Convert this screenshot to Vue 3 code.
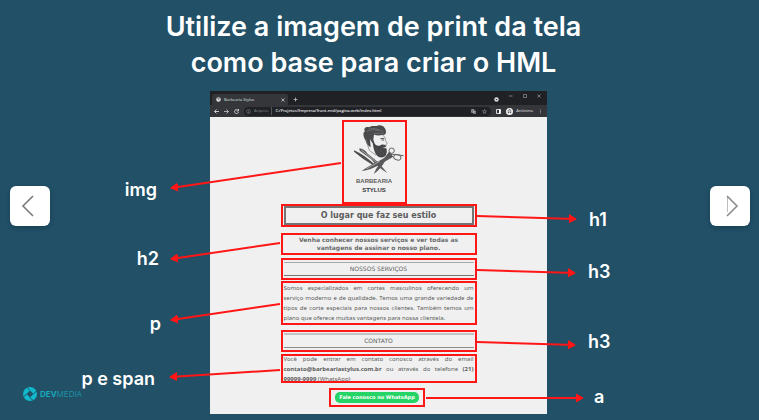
<script setup>
const arrows = [
  { x1: 131, y1: 72, x2: -39, y2: 97 },
  { x1: 70, y1: 152, x2: -39, y2: 168 },
  { x1: 70, y1: 213, x2: -39, y2: 229 },
  { x1: 70, y1: 279, x2: -40, y2: 286 },
  { x1: 267, y1: 125, x2: 366, y2: 128 },
  { x1: 267, y1: 179, x2: 365, y2: 182 },
  { x1: 267, y1: 251, x2: 365, y2: 254 },
  { x1: 216, y1: 307, x2: 373, y2: 307 }
]

const tags = [
  { text: 'img', x: -53, y: 105, side: 'end' },
  { text: 'h2', x: -51, y: 174, side: 'end' },
  { text: 'p', x: -49, y: 239, side: 'end' },
  { text: 'p e span', x: -55, y: 294, side: 'end' },
  { text: 'h1', x: 379, y: 135, side: 'start' },
  { text: 'h3', x: 378, y: 187, side: 'start' },
  { text: 'h3', x: 378, y: 257, side: 'start' },
  { text: 'a', x: 384, y: 312, side: 'start' }
]

const services = [
  'Somos especializados em cortes masculinos oferecendo um',
  'serviço moderno e de qualidade. Temos uma grande variedade de',
  'tipos de corte especiais para nossos clientes. Também temos um'
]
</script>

<template>
  <main class="slide">
    <h1 class="title">Utilize a imagem de print da tela<br />como base para criar o HML</h1>

    <figure class="diagram">
      <div class="browser">
        <div class="tabs">
          <div class="tab">
            <svg class="i5" viewBox="0 0 10 10"><circle cx="5" cy="5" r="4.5" fill="#e8eaed" /><path d="M2 3l3 1 1 3M6 1l-1 2 3 1" stroke="#35363a" fill="none" /></svg>
            <span>Barbearia Stylus</span>
            <svg class="i4 end" viewBox="0 0 8 8"><path d="M1 1l6 6M7 1L1 7" stroke="#d5d5d8" stroke-width="1.5" /></svg>
          </div>
          <svg class="i5 plus" viewBox="0 0 10 10"><path d="M5 1v8M1 5h8" stroke="#c9c9cc" stroke-width="1.5" /></svg>
          <div class="window-buttons">
            <svg class="i5 low" viewBox="0 0 10 10"><circle cx="5" cy="5" r="4.5" fill="#dcdcdf" /><path d="M3 4h4L5 7z" fill="#303136" /></svg>
            <svg class="i4" viewBox="0 0 8 8"><path d="M0 4h7" stroke="#9a9a9d" stroke-width="1.5" /></svg>
            <svg class="i4" viewBox="0 0 8 8"><path d="M1 1h6v6H1z" stroke="#9a9a9d" stroke-width="1.3" fill="none" /></svg>
            <svg class="i4" viewBox="0 0 8 8"><path d="M1 1l6 6M7 1L1 7" stroke="#aaaaad" stroke-width="1.3" /></svg>
          </div>
        </div>
        <div class="toolbar">
          <svg class="i5" viewBox="0 0 10 10"><path d="M10 5H1M5 1L1 5l4 4" stroke="#e2e2e5" stroke-width="1.7" fill="none" /></svg>
          <svg class="i5" viewBox="0 0 10 10"><path d="M0 5h9M5 1l4 4-4 4" stroke="#c2c2c5" stroke-width="1.7" fill="none" /></svg>
          <svg class="i5" viewBox="0 0 10 10"><path d="M8.500 3A4 4 0 1 0 9 6M9 0v4H5" stroke="#dadadd" stroke-width="1.7" fill="none" /></svg>
          <div class="address">
            <svg class="i5" viewBox="0 0 10 10"><circle cx="5" cy="5" r="4" stroke="#8b8c90" fill="none" /><path d="M5 2v1M5 4v4" stroke="#8b8c90" /></svg>
            <span class="scheme">Arquivo</span>
            <span class="url">C:/Projetos/Empresa/front-end/pagina-web/index.html</span>
            <svg class="i5 end" viewBox="0 0 10 10"><path d="M1 1h5v6H1zM5 4h4v5H5z" stroke="#bcbcc0" fill="#77787c" /></svg>
            <svg class="i5 star" viewBox="0 0 10 10"><path d="M5 1l1 3h3L6.500 6l1 3L5 7 2.500 9l1-3L1 4h3z" stroke="#a5a5a8" fill="none" /></svg>
          </div>
          <svg class="i5" viewBox="0 0 10 10"><path d="M1 1h8v8H1z" fill="none" stroke="#fff" stroke-width="1.6" /><path d="M6 1h3v8H6z" fill="#fff" /></svg>
          <div class="profile">
            <svg class="i7" viewBox="0 0 14 14"><circle cx="7" cy="7" r="7" fill="#f1f1f1" /><path d="M3 6h8M5 5l1-2h2l1 2" stroke="#55565a" fill="none" stroke-width="1.4" /><circle cx="5" cy="9" r="1.5" fill="#55565a" /><circle cx="9" cy="9" r="1.5" fill="#55565a" /></svg>
            <span>Anônima</span>
          </div>
          <svg class="i5" viewBox="0 0 10 10"><path d="M5 1v2M5 4v2M5 7v2" stroke="#aaaaad" stroke-width="1.5" /></svg>
        </div>

        <div class="page">
          <div class="brand mark">
            <svg class="barber" viewBox="-18 12 180 165" role="img" aria-label="Barbearia Stylus">
              <path d="M47 68C39 55 38 43 45 40C39 32 48 25 57 28C68 19 78 28 86 22C96 19 108 28 108 42Q108 51 98 51Q82 54 72 50L70 65L75 81Q66 76 60 64L62 88Q49 80 47 68Z" fill="#4b4b4d" />
              <path d="M50 40Q68 31 87 37M56 33Q74 27 101 42M70 48Q86 43 101 47" stroke="#88888a" stroke-width="1.5" fill="none" />
              <path d="M48 64Q53 82 58 97L78 112" stroke="#777779" stroke-width="2" fill="none" />
              <path d="M99 51L107 62L105 66L112 77L107 80L109 85" stroke="#777779" stroke-width="2" fill="none" />
              <path d="M91 62l12-1M95 66h7" stroke="#59595b" stroke-width="3" />
              <path d="M68 69Q77 86 89 83Q96 77 106 81L108 87L97 90L109 91Q113 103 106 114Q91 124 80 112Q69 97 68 69Z" fill="#464648" />
              <path d="M79 91q5 13 13 21M90 94q4 9 12 15" stroke="#707072" fill="none" />
              <path d="M28 91Q42 92 53 107L84 132L112 165Q83 148 63 123L29 98Z" fill="#59595b" />
              <path d="M34 96L85 137" stroke="#d5d5d5" stroke-width="2" />
              <path d="M12 97Q40 109 70 136L79 140L74 145Q40 125 12 101Z" fill="#4e4e50" />
              <path d="M123 108L88 128Q53 145 35 159Q61 158 96 136L130 116Z" fill="#59595b" />
              <path d="M117 101L94 132Q79 148 71 168Q91 155 105 130L128 110Z" fill="#59595b" />
              <path d="M89 130L49 153" stroke="#c9c9c9" stroke-width="2" />
              <ellipse cx="125" cy="98" rx="8" ry="8" stroke="#646466" stroke-width="3" fill="none" />
              <ellipse cx="142" cy="118" rx="11" ry="8" stroke="#646466" stroke-width="3" fill="none" transform="rotate(20 142 118)" />
              <path d="M127 109Q143 110 161 113" stroke="#646466" stroke-width="3" fill="none" />
            </svg>
            <span class="brand-top">BARBEARIA</span>
            <strong class="brand-name">STYLUS</strong>
          </div>
          <div class="mark headline"><h2>O lugar que faz seu estilo</h2></div>
          <p class="mark lead">Venha conhecer nossos serviços e ver todas as<br />vantagens de assinar o nosso plano.</p>
          <div class="mark section"><h3>NOSSOS SERVIÇOS</h3></div>
          <p class="mark copy">
            <span v-for="line in services" :key="line" class="line">{{ line }}</span>
            <span class="line last">plano que oferece muitas vantagens para nossa clientela.</span>
          </p>
          <div class="mark section contact"><h3>CONTATO</h3></div>
          <div class="mark copy clipped">
            <p>
              <span class="line">Você pode entrar em contato conosco através do email</span>
              <span class="line"><b>contato@barbeariastylus.com.br</b> ou através do telefone <b>(21)</b></span>
              <span class="line last"><b>99999-9999</b> (WhatsApp)</span>
            </p>
          </div>
          <div class="mark cta"><a href="#whatsapp">Fale conosco no WhatsApp</a></div>
        </div>
      </div>

      <svg class="notes">
        <defs>
          <marker id="head" markerUnits="userSpaceOnUse" markerWidth="8" markerHeight="10" refX="7" refY="5" orient="auto">
            <path d="M0 1L7 5L0 9Z" fill="#ff1616" stroke="#ff1616" stroke-linejoin="round" />
          </marker>
        </defs>
        <line v-for="(a, i) in arrows" :key="i" :x1="a.x1" :y1="a.y1" :x2="a.x2" :y2="a.y2" marker-end="url(#head)" />
        <text v-for="(t, i) in tags" :key="'t' + i" :x="t.x" :y="t.y" :text-anchor="t.side">{{ t.text }}</text>
      </svg>
    </figure>

    <button class="nav prev" type="button" aria-label="Anterior">
      <svg viewBox="0 0 40 40"><path d="M23 10L13 20L23 30" fill="none" stroke="#7b7b7b" stroke-width="1.6" /></svg>
    </button>
    <button class="nav next" type="button" aria-label="Próximo">
      <svg viewBox="0 0 40 40"><path d="M17.500 10V26" stroke="#bdbdbd" /><path d="M17 10L27 20L17 30" fill="none" stroke="#8b8b8b" stroke-width="1.6" /></svg>
    </button>

    <div class="devmedia">
      <svg viewBox="0 0 28 28">
        <circle cx="14" cy="14" r="14" fill="#10b9cb" />
        <path d="M14 7l7 7-7 7-7-7z" fill="#215067" />
        <path d="M14 7L8 1M21 14l6-6M14 21l6 6M7 14l-6 6" stroke="#215067" stroke-width="2" />
      </svg>
      <span><b>DEV</b>MEDIA</span>
    </div>
  </main>
</template>

<style>
body {
  margin: 0;
  background: #215067;
}
</style>

<style scoped>
.slide {
  position: relative;
  box-sizing: border-box;
  min-height: 100vh;
  padding: 9px 2px 6px 0;
  overflow: hidden;
  background: #215067;
  font-family: Inter, "Open Sans", sans-serif;
}
.title {
  margin: 0 0 10px;
  padding-right: 10px;
  color: #fff;
  font-size: 27px;
  font-weight: 600;
  line-height: 36px;
  text-align: center;
}
.diagram {
  position: relative;
  width: 337px;
  margin: 0 auto;
}
.browser {
  background: #f0f0f0;
}
.tabs {
  display: flex;
  align-items: flex-end;
  height: 14px;
  padding-left: 2px;
  background: #202124;
  color: #dfe0e3;
}
.tab {
  display: flex;
  align-items: center;
  gap: 3px;
  box-sizing: border-box;
  width: 76px;
  height: 11px;
  padding: 0 3px 0 4px;
  border-radius: 2px 2px 0 0;
  background: #35363a;
  font: 4px/8px "Open Sans", sans-serif;
}
.i4, .i5, .i7 {
  flex: none;
  display: block;
}
.i4 { width: 4px; height: 4px; }
.i5 { width: 5px; height: 5px; }
.i7 { width: 7px; height: 7px; }
.end { margin-left: auto; }
.plus { margin: 0 0 3px 5px; }
.window-buttons {
  display: flex;
  gap: 10px;
  align-self: flex-start;
  margin: 3px 6px 0 auto;
}
.low { margin-top: 3px; }
.toolbar {
  display: flex;
  align-items: center;
  gap: 5px;
  height: 12px;
  padding: 0 4px 0 4px;
  background: #35363a;
  color: #e4e4e7;
  font: 4px/8px "Open Sans", sans-serif;
}
.address {
  display: flex;
  flex: 1;
  align-items: center;
  gap: 3px;
  height: 9px;
  padding: 0 4px 0 2px;
  border-radius: 5px;
  background: #202124;
}
.scheme {
  padding-right: 3px;
  border-right: 1px solid #55565a;
  color: #85868a;
}
.url { font-weight: 600; }
.star { margin-left: 3px; }
.profile {
  display: flex;
  align-items: center;
  gap: 3px;
}
.page {
  display: flex;
  flex-direction: column;
  align-items: center;
  box-sizing: border-box;
  padding: 3px 0 7px;
  color: #5c5c5c;
  font-family: "DejaVu Sans", sans-serif;
}
.mark {
  box-sizing: border-box;
  width: 196px;
  border: 2px solid #ff1616;
}
.brand {
  display: flex;
  flex-direction: column;
  align-items: center;
  width: 65px;
  height: 84px;
  margin-right: 9px;
  font-family: "Liberation Sans", sans-serif;
}
.barber {
  width: 60px;
  height: 55px;
}
.brand-top {
  font-size: 6px;
  font-weight: 600;
  line-height: 9px;
}
.brand-name {
  color: #333;
  font-size: 6px;
  line-height: 8px;
}
.headline {
  padding: 0 1px;
}
h2, h3, p {
  margin: 0;
}
h2 {
  border: 2px solid #737373;
  font-size: 8px;
  line-height: 15px;
  text-align: center;
}
.lead {
  margin: 6px 0 3px;
  padding: 1px 0;
  color: #6b6b6b;
  font-size: 6px;
  font-weight: 700;
  line-height: 8px;
  text-align: center;
}
.section {
  padding: 2px 1px;
}
.section h3 {
  border-top: 1px solid #aaa;
  border-bottom: 1px solid #777;
  font-size: 6px;
  font-weight: 400;
  line-height: 12px;
  text-align: center;
}
.copy {
  margin: 1px 0 5px;
  padding: 0 1px;
  font-family: "Noto Sans", sans-serif;
  font-size: 6px;
  line-height: 10px;
}
.line {
  display: block;
  white-space: nowrap;
  text-align: justify;
  text-align-last: justify;
}
.last {
  text-align-last: left;
}
.contact {
  padding-top: 1px;
}
.contact h3 {
  border-top: 2px solid #c2c2c2;
  border-bottom-color: #8b8b8b;
}
.clipped {
  height: 29px;
  margin-top: 2px;
  overflow: hidden;
}
.clipped p {
  margin-top: -2px;
}
.cta {
  width: 96px;
  margin-right: 3px;
  padding: 2px 4px;
}
.cta a {
  display: block;
  border-radius: 5px;
  background: #25d366;
  color: #fff;
  font-size: 5px;
  font-weight: 700;
  line-height: 11px;
  text-align: center;
  text-decoration: none;
}
.notes {
  position: absolute;
  inset: 0;
  width: 100%;
  height: 100%;
  overflow: visible;
  pointer-events: none;
}
.notes line {
  stroke: #ff1616;
  stroke-width: 2;
}
.notes text {
  fill: #fff;
  font-size: 18px;
  font-weight: 600;
}
.nav {
  position: absolute;
  top: 186px;
  width: 40px;
  height: 40px;
  padding: 0;
  border: 0;
  border-radius: 6px;
  background: #fff;
  box-shadow: 0 2px 5px #0003;
}
.nav svg {
  display: block;
}
.prev { left: 10px; }
.next { right: 9px; }
.devmedia {
  position: absolute;
  bottom: 19px;
  left: 23px;
  display: flex;
  align-items: center;
  gap: 3px;
  color: #1c91a3;
  font-size: 8px;
  line-height: 14px;
}
.devmedia svg {
  width: 14px;
  height: 14px;
}
.devmedia b {
  color: #16a9bb;
}
</style>
